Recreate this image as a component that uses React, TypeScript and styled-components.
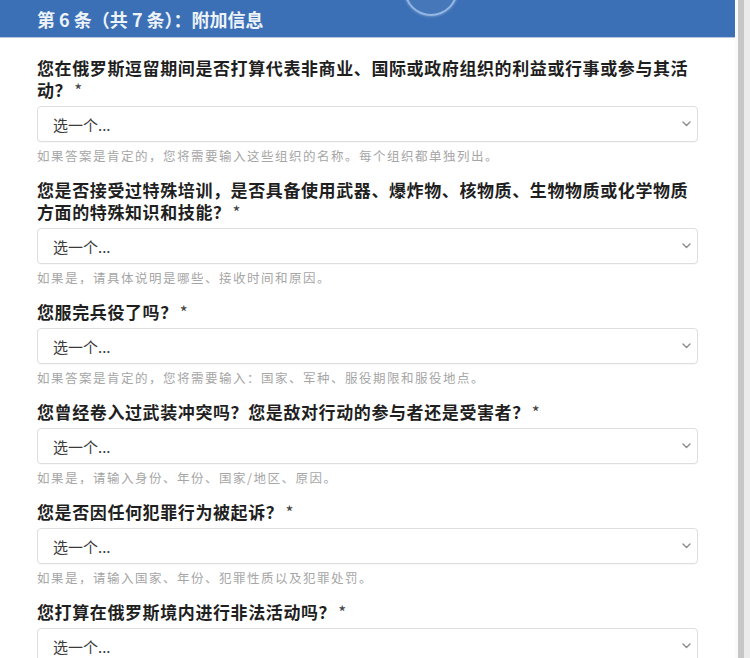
import React from "react";
import styled, { createGlobalStyle } from "styled-components";

const GlobalStyle = createGlobalStyle`
  html, body {
    margin: 0;
    padding: 0;
    height: 658px;
    overflow: hidden;
    background: #fff;
  }
  body {
    font-family: "Noto Sans CJK SC", "Noto Sans", sans-serif;
  }
`;

const Page = styled.div`
  display: flex;
  width: 750px;
  height: 658px;
  overflow: hidden;
`;

const Main = styled.div`
  flex: 1;
  display: flex;
  flex-direction: column;
  min-width: 0;
`;

const Rail = styled.div`
  width: 15px;
  flex-shrink: 0;
  background: linear-gradient(
    to right,
    #fafafa 0 3px,
    #c6c6c6 3px 9px,
    #ebebeb 9px 15px
  );
`;

const Header = styled.div`
  position: relative;
  flex-shrink: 0;
  height: 37px;
  display: flex;
  align-items: center;
  padding-left: 37px;
  background: #3c70b6;
  border-bottom: 1px solid #b4c8e2;
  overflow: hidden;
`;

const Title = styled.h1`
  margin: 0;
  font-size: 18px;
  font-weight: 700;
  color: #eef3fa;
`;

// the round spinner peeking in from the top edge
const Halo = styled.div`
  position: absolute;
  left: 404px;
  top: -38px;
  width: 50px;
  height: 50px;
  border-radius: 50%;
  border: 2px solid rgba(175, 205, 240, 0.75);
  background: rgba(255, 255, 255, 0.05);
  box-shadow: 0 0 3px rgba(200, 220, 245, 0.6);
`;

const Form = styled.div`
  flex-shrink: 0;
  display: flex;
  flex-direction: column;
  gap: 15px;
  padding: 19px 37px 0;
`;

const Field = styled.div`
  display: flex;
  flex-direction: column;
`;

const Label = styled.label`
  font-size: 17px;
  line-height: 22px;
  font-weight: 700;
  letter-spacing: 0.6px;
  color: #1f1f1f;
  margin-bottom: 5px;
`;

const Star = styled.span`
  font-weight: 400;
  color: #444;
  margin-left: 2px;
`;

const Select = styled.div`
  height: 36px;
  box-sizing: border-box;
  display: flex;
  align-items: center;
  justify-content: space-between;
  padding: 0 6px 0 15px;
  border: 1px solid #dedede;
  border-radius: 4px;
  background: #fff;
  box-shadow: 0 1px 1px rgba(0, 0, 0, 0.03);
`;

const Placeholder = styled.span`
  font-size: 15px;
  color: #3a3a3a;
`;

const Help = styled.div`
  margin-top: 6px;
  font-size: 12.5px;
  line-height: 16px;
  letter-spacing: 1.5px;
  color: #a6a6a6;
`;

const Chevron = () => (
  <svg width="9" height="6" viewBox="0 0 9 6">
    <polyline
      points="1,1 4.5,4.5 8,1"
      fill="none"
      stroke="#8a8a8a"
      strokeWidth="1.4"
      strokeLinecap="round"
      strokeLinejoin="round"
    />
  </svg>
);

type Question = { label: string; help?: string };

const questions: Question[] = [
  {
    label: "您在俄罗斯逗留期间是否打算代表非商业、国际或政府组织的利益或行事或参与其活动？",
    help: "如果答案是肯定的，您将需要输入这些组织的名称。每个组织都单独列出。",
  },
  {
    label: "您是否接受过特殊培训，是否具备使用武器、爆炸物、核物质、生物物质或化学物质方面的特殊知识和技能？",
    help: "如果是，请具体说明是哪些、接收时间和原因。",
  },
  {
    label: "您服完兵役了吗？",
    help: "如果答案是肯定的，您将需要输入：国家、军种、服役期限和服役地点。",
  },
  {
    label: "您曾经卷入过武装冲突吗？您是敌对行动的参与者还是受害者？",
    help: "如果是，请输入身份、年份、国家/地区、原因。",
  },
  {
    label: "您是否因任何犯罪行为被起诉？",
    help: "如果是，请输入国家、年份、犯罪性质以及犯罪处罚。",
  },
  {
    label: "您打算在俄罗斯境内进行非法活动吗？",
  },
];

const App: React.FC = () => {
  return (
    <>
      <GlobalStyle />
      <Page>
        <Main>
          <Header>
            <Title>第 6 条（共 7 条）：附加信息</Title>
            <Halo />
          </Header>
          <Form>
            {questions.map((q, i) => (
              <Field key={i}>
                <Label>
                  {q.label}
                  <Star>*</Star>
                </Label>
                <Select>
                  <Placeholder>选一个...</Placeholder>
                  <Chevron />
                </Select>
                {q.help && <Help>{q.help}</Help>}
              </Field>
            ))}
          </Form>
        </Main>
        <Rail />
      </Page>
    </>
  );
};

export default App;
